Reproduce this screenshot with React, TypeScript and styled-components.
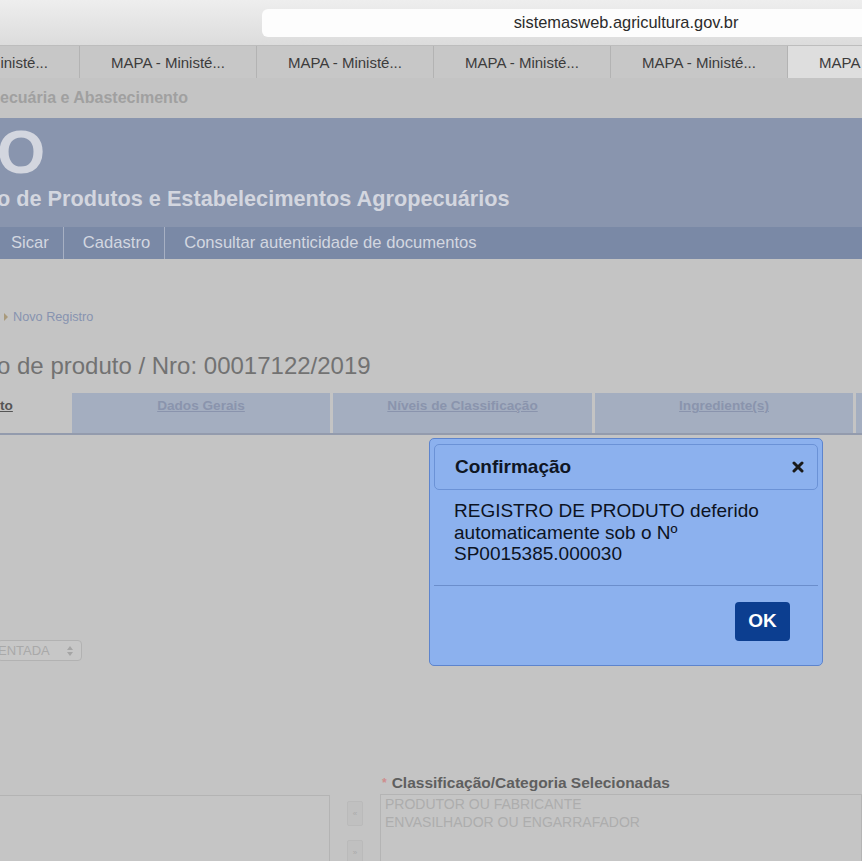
import React from "react";
import styled, { createGlobalStyle } from "styled-components";

const Global = createGlobalStyle`
  html, body { margin: 0; padding: 0; background: #c4c4c4; }
  * { box-sizing: border-box; }
`;

const Root = styled.div`
  width: 862px;
  height: 861px;
  overflow: hidden;
  position: relative;
  background: #c4c4c4;
  font-family: "Liberation Sans", Arial, Helvetica, sans-serif;
`;

const Toolbar = styled.div`
  height: 45px;
  background: linear-gradient(#eeeeee, #dcdcdc);
  display: flex;
  align-items: center;
  padding-left: 262px;
  overflow: hidden;
`;

const UrlField = styled.div`
  flex: none;
  width: 728px;
  height: 28px;
  background: #fdfdfd;
  border-radius: 6px;
  display: flex;
  align-items: center;
  justify-content: center;
  font-size: 16.4px;
  color: #2b2b2b;
`;

const TabStrip = styled.div`
  height: 33px;
  background: #c7c7c7;
  display: flex;
  margin-left: -97px;
  border-top: 1px solid #bdbdbd;
`;

const BrowserTab = styled.div<{ $active?: boolean }>`
  flex: none;
  width: 177px;
  display: flex;
  align-items: center;
  justify-content: center;
  font-size: 15px;
  color: #3c3c3c;
  border-right: 1px solid #b3b3b3;
  background: ${(p) => (p.$active ? "#dedede" : "transparent")};
`;

const SiteLine = styled.div`
  height: 40px;
  display: flex;
  align-items: center;
  font-size: 16px;
  font-weight: bold;
  color: #a0a0a0;
`;

const Header = styled.div`
  height: 109px;
  background: #8995ae;
  padding-top: 4px;
  color: #d3d6df;
  font-weight: bold;
`;

const Logo = styled.div`
  font-size: 62px;
  line-height: 60px;
  margin-left: -3px;
`;

const Subtitle = styled.div`
  margin-top: 4px;
  font-size: 21.7px;
  line-height: 25px;
  margin-left: -3px;
`;

const Nav = styled.div`
  height: 32px;
  background: #7a89a6;
  display: flex;
  margin-left: -8px;
`;

const NavItem = styled.div<{ $last?: boolean }>`
  display: flex;
  align-items: center;
  padding: 0 14px 0 19px;
  font-size: 16.6px;
  color: #d3d7e0;
  border-right: ${(p) => (p.$last ? "none" : "1px solid #a7b0c3")};
`;

const Main = styled.div`
  padding-top: 50px;
`;

const Breadcrumb = styled.div`
  display: flex;
  align-items: center;
  height: 16px;
  gap: 5px;
  padding-left: 4px;
  font-size: 12.7px;
  color: #8793b0;
`;

const Arrow = styled.span`
  width: 0;
  height: 0;
  border-top: 4px solid transparent;
  border-bottom: 4px solid transparent;
  border-left: 4px solid #a99a7c;
`;

const PageTitle = styled.h1`
  margin: 27px 0 0 -3px;
  font-size: 24px;
  line-height: 28px;
  font-weight: normal;
  color: #727272;
`;

const FormTabs = styled.div`
  margin-top: 13px;
  display: flex;
  gap: 3px;
  height: 42px;
  border-bottom: 2px solid #939bad;
`;

const FormTab = styled.div<{ $active?: boolean; $w: number }>`
  flex: none;
  width: ${(p) => p.$w}px;
  padding-top: 5px;
  text-align: ${(p) => (p.$active ? "left" : "center")};
  font-size: 13.6px;
  font-weight: bold;
  text-decoration: underline;
  color: ${(p) => (p.$active ? "#555555" : "#8a94ad")};
  background: ${(p) => (p.$active ? "transparent" : "#a4aec0")};
`;

const SelectBox = styled.div`
  margin: 205px 0 0 -3px;
  width: 85px;
  height: 21px;
  border: 1px solid #b2b2b2;
  border-radius: 4px;
  background: #c7c7c7;
  display: flex;
  align-items: center;
  justify-content: space-between;
  padding-right: 8px;
  font-size: 13px;
  color: #a9a9a9;
`;

const Updown = styled.span`
  display: flex;
  flex-direction: column;
  gap: 2px;
`;

const Tri = styled.span<{ $up?: boolean }>`
  width: 0;
  height: 0;
  border-left: 3px solid transparent;
  border-right: 3px solid transparent;
  ${(p) =>
    p.$up ? "border-bottom: 4px solid #a5a5a5;" : "border-top: 4px solid #a5a5a5;"}
`;

const Lists = styled.div`
  margin-top: 113px;
  display: grid;
  grid-template-columns: 331px 16px 1fr;
  column-gap: 17px;
  margin-left: -1px;
`;

const ListLabel = styled.div`
  grid-column: 3;
  margin-left: 2px;
  font-size: 15.5px;
  font-weight: bold;
  line-height: 18px;
  color: #5f5f5f;
  height: 20px;
`;

const Star = styled.span`
  color: #cf8d8d;
  font-size: 12px;
  margin-right: 5px;
  vertical-align: top;
`;

const ListBox = styled.div<{ $col: number }>`
  grid-column: ${(p) => p.$col};
  grid-row: 2;
  height: 120px;
  border: 1px solid #b4b4b4;
  background: #c5c5c5;
  padding: 0 4px;
  font-size: 14px;
  line-height: 18px;
  color: #adadad;
  margin-top: ${(p) => (p.$col === 1 ? 1 : 0)}px;
`;

const MoveButtons = styled.div`
  grid-column: 2;
  grid-row: 2;
  display: flex;
  flex-direction: column;
  gap: 14px;
  padding-top: 7px;
`;

const MoveBtn = styled.div`
  width: 16px;
  height: 25px;
  background: #c0c0c0;
  border: 1px solid #bababa;
  border-radius: 2px;
  display: flex;
  align-items: center;
  justify-content: center;
  font-size: 8px;
  color: #aaaaaa;
`;

const Modal = styled.div`
  position: absolute;
  left: 429px;
  top: 438px;
  width: 394px;
  height: 228px;
  background: #8cb1ee;
  border: 1px solid #5d84cd;
  border-radius: 5px;
  padding: 5px 4px;
  display: flex;
  flex-direction: column;
`;

const ModalHeader = styled.div`
  height: 46px;
  border: 1px solid #6b92d6;
  border-radius: 5px;
  display: flex;
  align-items: center;
  justify-content: space-between;
  padding: 0 13px 0 20px;
  font-size: 19px;
  font-weight: bold;
  color: #0f1624;
`;

const CloseIcon = styled.svg`
  width: 12px;
  height: 12px;
`;

const ModalBody = styled.div`
  padding: 10px 20px 20px 20px;
  font-size: 19px;
  line-height: 21.5px;
  color: #0c1322;
  border-bottom: 1px solid #6b8ecc;
`;

const ModalFooter = styled.div`
  display: flex;
  justify-content: flex-end;
  padding: 16px 28px 0 0;
`;

const OkButton = styled.button`
  width: 55px;
  height: 39px;
  border: none;
  border-radius: 4px;
  background: #0c3e90;
  color: #ffffff;
  font-family: inherit;
  font-size: 19px;
  font-weight: bold;
  padding: 0;
`;

export default function App() {
  const tabs = Array.from({ length: 6 }, (_, i) => i);
  return (
    <Root>
      <Global />
      <Toolbar>
        <UrlField>sistemasweb.agricultura.gov.br</UrlField>
      </Toolbar>
      <TabStrip>
        {tabs.map((i) => (
          <BrowserTab key={i} $active={i === 5}>
            MAPA - Ministé...
          </BrowserTab>
        ))}
      </TabStrip>
      <SiteLine>ecuária e Abastecimento</SiteLine>
      <Header>
        <Logo>O</Logo>
        <Subtitle>o de Produtos e Estabelecimentos Agropecuários</Subtitle>
      </Header>
      <Nav>
        <NavItem>Sicar</NavItem>
        <NavItem>Cadastro</NavItem>
        <NavItem $last>Consultar autenticidade de documentos</NavItem>
      </Nav>
      <Main>
        <Breadcrumb>
          <Arrow />
          Novo Registro
        </Breadcrumb>
        <PageTitle>o de produto / Nro: 00017122/2019</PageTitle>
        <FormTabs>
          <FormTab $active $w={69}>to</FormTab>
          <FormTab $w={258}>Dados Gerais</FormTab>
          <FormTab $w={259}>Níveis de Classificação</FormTab>
          <FormTab $w={258}>Ingrediente(s)</FormTab>
          <FormTab $w={60}> </FormTab>
        </FormTabs>
        <SelectBox>
          <span>ENTADA</span>
          <Updown>
            <Tri $up />
            <Tri />
          </Updown>
        </SelectBox>
        <Lists>
          <ListLabel>
            <Star>*</Star>Classificação/Categoria Selecionadas
          </ListLabel>
          <ListBox $col={1} />
          <MoveButtons>
            <MoveBtn>«</MoveBtn>
            <MoveBtn>»</MoveBtn>
          </MoveButtons>
          <ListBox $col={3}>
            <div>PRODUTOR OU FABRICANTE</div>
            <div>ENVASILHADOR OU ENGARRAFADOR</div>
          </ListBox>
        </Lists>
      </Main>
      <Modal>
        <ModalHeader>
          Confirmação
          <CloseIcon viewBox="0 0 12 12">
            <path d="M2 2 L10 10 M10 2 L2 10" stroke="#1a1a1a" strokeWidth="3" strokeLinecap="round" />
          </CloseIcon>
        </ModalHeader>
        <ModalBody>
          REGISTRO DE PRODUTO deferido automaticamente sob o Nº SP0015385.000030
        </ModalBody>
        <ModalFooter>
          <OkButton>OK</OkButton>
        </ModalFooter>
      </Modal>
    </Root>
  );
}
